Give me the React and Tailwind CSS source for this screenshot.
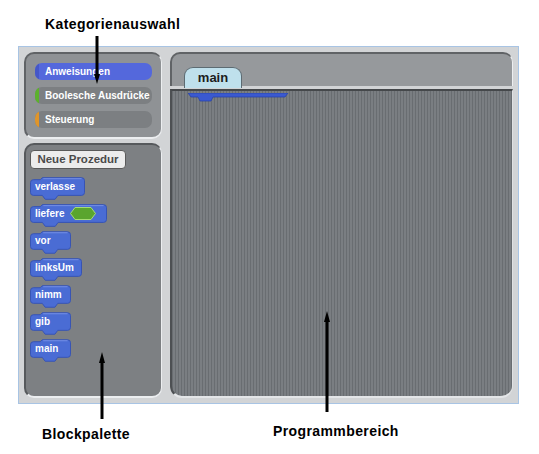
import React from "react";

const FONT = { fontFamily: '"Liberation Sans", Arial, sans-serif' };

function Block({ w, label, children }) {
  const path = `M0,5 Q0,2 3,2 L10,2 L12,0 L${w - 3},0 Q${w},0 ${w},3 L${w},15 Q${w},18 ${w - 3},18 L28,18 L25,22 L15,22 L12,18 L3,18 Q0,18 0,15 Z`;
  return (
    <div className="relative h-[22px]" style={{ width: w }}>
      <svg className="absolute left-0 top-0" width={w} height="23" viewBox={`-0.5 -0.5 ${w + 1} 23`}>
        <path d={path} fill="#4a6cd4" stroke="#3653b4" strokeWidth="1" />
        <path d={`M13,1 L${w - 3},1`} stroke="#7590e6" strokeWidth="1" />
      </svg>
      <div className="relative flex h-[19px] items-center gap-[6px] pl-[5px] text-[10px] font-bold text-white">
        <span>{label}</span>
        {children}
      </div>
    </div>
  );
}

function Category({ label, cap, active }) {
  return (
    <div
      className={`flex h-[17px] w-[117px] items-center overflow-hidden rounded-[7px] text-[10px] font-bold text-white ${
        active ? "bg-[#5468dc]" : "bg-[#7c7f82]"
      }`}
    >
      <div className={`h-full w-[4px] ${cap}`} />
      <span className="pl-[6px]">{label}</span>
    </div>
  );
}

function ArrowDown({ className }) {
  return (
    <svg className={className} width="10" height="50" viewBox="0 0 10 50">
      <line x1="5" y1="0" x2="5" y2="40" stroke="#000" strokeWidth="3" />
      <polygon points="2,38 8,38 5,48" fill="#000" />
    </svg>
  );
}

function ArrowUp({ className, h }) {
  return (
    <svg className={className} width="10" height={h} viewBox={`0 0 10 ${h}`}>
      <polygon points={`5,0 2,11 8,11`} fill="#000" />
      <line x1="5" y1="8" x2="5" y2={h} stroke="#000" strokeWidth="3" />
    </svg>
  );
}

export default function App() {
  const blocks = [
    { label: "verlasse", w: 55 },
    { label: "liefere", w: 77, hex: true },
    { label: "vor", w: 41 },
    { label: "linksUm", w: 52 },
    { label: "nimm", w: 41 },
    { label: "gib", w: 41 },
    { label: "main", w: 41 },
  ];

  return (
    <div className="relative h-[454px] w-[539px] overflow-hidden bg-white" style={FONT}>
      <div className="pl-[18px] pt-[46px]">
        {/* Frame */}
        <div className="flex h-[358px] w-[501px] gap-[8px] border border-[#a8c4e4] bg-[#d2d4d6] p-[5px]">
          {/* Left column */}
          <div className="flex w-[138px] flex-col gap-[4px]">
            {/* Kategorien */}
            <div className="flex h-[87px] flex-col gap-[7px] rounded-[10px] border-l-2 border-t-2 border-r border-b-2 border-l-[#606366] border-t-[#606366] border-r-[#eceef0] border-b-[#eceef0] bg-[#8f9295] pl-[9px] pt-[9px]">
              <Category label="Anweisungen" cap="bg-[#4557c8]" active />
              <Category label="Boolesche Ausdrücke" cap="bg-[#5cb12c]" />
              <Category label="Steuerung" cap="bg-[#e0952a]" />
            </div>

            {/* Blockpalette */}
            <div className="flex flex-1 flex-col gap-[5px] rounded-[10px] border-l-2 border-t-2 border-r border-b-2 border-l-[#56595c] border-t-[#56595c] border-r-[#eceef0] border-b-[#eceef0] bg-[#7d8083] pl-[4px] pt-[5px]">
              <div className="mb-[3px] flex h-[19px] w-[96px] items-center justify-center rounded-[4px] border border-[#5a5a5a] bg-[#ececec] text-[11.5px] font-bold text-[#4a4a4a]">
                Neue Prozedur
              </div>
              {blocks.map((b) => (
                <Block key={b.label} w={b.w} label={b.label}>
                  {b.hex && (
                    <svg width="26" height="13" viewBox="0 0 26 13">
                      <polygon points="5,0.5 21,0.5 25.5,6.5 21,12.5 5,12.5 0.5,6.5" fill="#5aa52e" stroke="#a6dc74" strokeWidth="1" />
                    </svg>
                  )}
                </Block>
              ))}
            </div>
          </div>

          {/* Right column */}
          <div className="flex flex-1 flex-col gap-[3px]">
            <div className="flex h-[34px] items-end rounded-t-[10px] border-l-2 border-t-2 border-r border-l-[#606366] border-t-[#606366] border-r-[#eceef0] bg-[#96999c] pl-[12px]">
              <div className="mb-[-2px] flex h-[21px] w-[58px] items-center justify-center rounded-t-[9px] border border-b-0 border-[#5d6b72] bg-[#bfe0ec] text-[13px] font-bold text-[#1c1c1c]">
                main
              </div>
            </div>
            <div className="relative flex-1 rounded-b-[12px] border-l-2 border-t-2 border-r border-b-2 border-l-[#4d5053] border-t-[#45484b] border-r-[#dfe1e3] border-b-[#e4e6e8] bg-[repeating-linear-gradient(90deg,#696d71_0px,#696d71_1px,#7a7e82_1px,#7a7e82_3px)]">
              <svg className="absolute left-[16px] top-[2px]" width="102" height="10" viewBox="0 0 102 10">
                <path d="M0,0 L100,0 L97,4 L25,4 L23,8 L12,8 L10,4 L3,4 Z" fill="#3a59d0" stroke="#2a44a8" strokeWidth="0.8" />
              </svg>
            </div>
          </div>
        </div>
      </div>

      {/* Annotations */}
      <div className="absolute left-[45px] top-[14px] text-[14px] font-bold tracking-[0.4px] text-black">
        Kategorienauswahl
      </div>
      <ArrowDown className="absolute left-[92px] top-[36px]" />

      <ArrowUp className="absolute left-[97px] top-[352px]" h={67} />
      <div className="absolute left-[42px] top-[424px] text-[14px] font-bold tracking-[0.4px] text-black">
        Blockpalette
      </div>

      <ArrowUp className="absolute left-[322px] top-[311px]" h={101} />
      <div className="absolute left-[273px] top-[421px] text-[14px] font-bold tracking-[0.4px] text-black">
        Programmbereich
      </div>
    </div>
  );
}
